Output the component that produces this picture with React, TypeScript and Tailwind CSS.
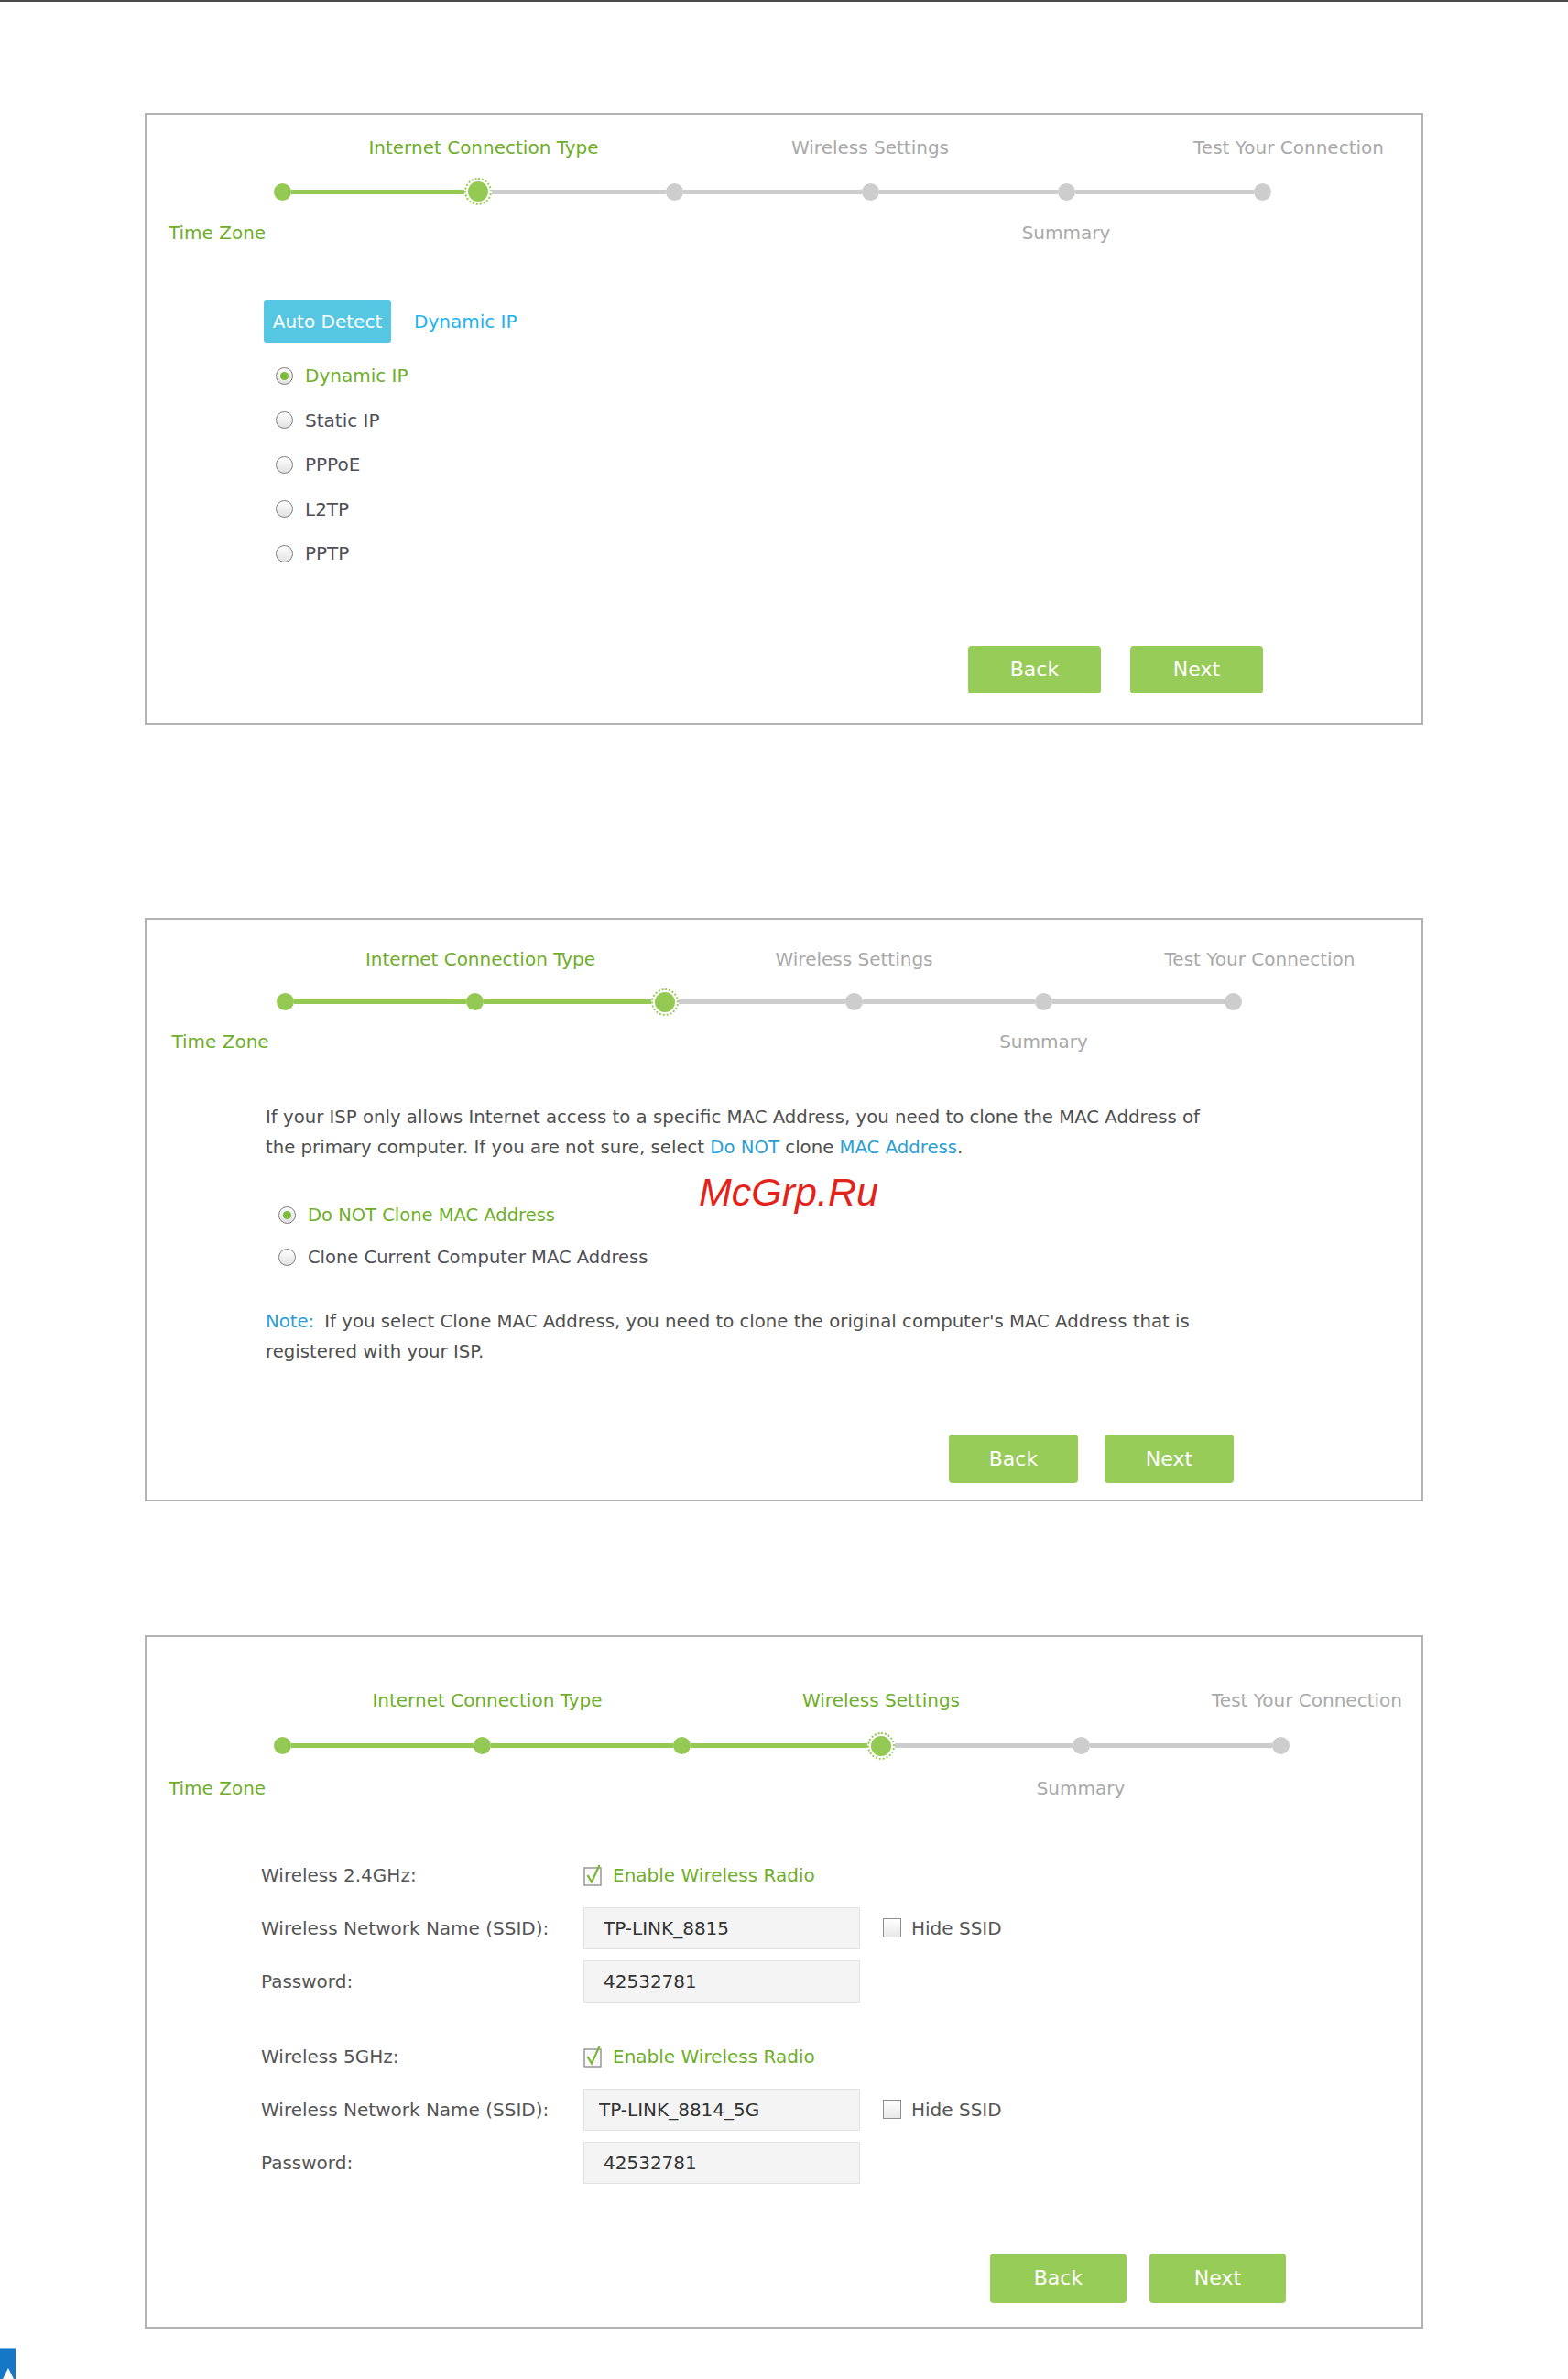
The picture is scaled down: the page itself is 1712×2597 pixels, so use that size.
import React from 'react';

const GREEN = 'bg-[#94c954]';
const GRAY = 'bg-[#cdcdcd]';

type StepperProps = {
  offset: string;
  col: string;
  current: number;
  dotsGap: string;
  bottomGap: string;
};

const TOP_LABELS = ['', 'Internet Connection Type', '', 'Wireless Settings', '', 'Test Your Connection'];
const BOTTOM_LABELS = ['Time Zone', '', '', '', 'Summary', ''];

function Stepper({ offset, col, current, dotsGap, bottomGap }: StepperProps) {
  const labelColor = (i: number) => (i <= current && i !== 4 && i !== 5 ? 'text-[#6fae2a]' : 'text-[#a9a9a9]');
  const topShift = (i: number) => (i === 5 ? 'ml-[58px]' : i === 1 ? 'ml-[12px]' : '');

  return (
    <div className={offset}>
      <div className="flex h-[24px] text-[20px] leading-[24px]">
        {TOP_LABELS.map((label, i) => (
          <div key={i} className={`flex shrink-0 justify-center ${col}`}>
            {label && <span className={`whitespace-nowrap ${labelColor(i)} ${topShift(i)}`}>{label}</span>}
          </div>
        ))}
      </div>

      <div className={`flex h-[30px] ${dotsGap}`}>
        {TOP_LABELS.map((_, i) => {
          const left = i === 0 ? 'bg-transparent' : i <= current ? GREEN : GRAY;
          const right = i === 5 ? 'bg-transparent' : i < current ? GREEN : GRAY;
          return (
            <div key={i} className={`flex shrink-0 items-center ${col}`}>
              <div className={`h-[5px] flex-1 ${left}`} />
              {i === current ? (
                <div className="h-[30px] w-[30px] shrink-0 rounded-full border-2 border-dotted border-[#94c954] p-[2px]">
                  <div className="h-full w-full rounded-full bg-[#94c954]" />
                </div>
              ) : (
                <div className={`h-[19px] w-[19px] shrink-0 rounded-full ${i < current ? GREEN : GRAY}`} />
              )}
              <div className={`h-[5px] flex-1 ${right}`} />
            </div>
          );
        })}
      </div>

      <div className={`flex h-[24px] text-[20px] leading-[24px] ${bottomGap}`}>
        {BOTTOM_LABELS.map((label, i) => (
          <div key={i} className={`flex shrink-0 justify-center ${col}`}>
            {label && (
              <span className={`whitespace-nowrap ${labelColor(i)} ${i === 0 ? 'mr-[142px]' : ''}`}>{label}</span>
            )}
          </div>
        ))}
      </div>
    </div>
  );
}

function Radio({ checked }: { checked?: boolean }) {
  return (
    <span className="flex h-[19px] w-[19px] shrink-0 items-center justify-center rounded-full border-[1.5px] border-[#7d7d7d] bg-linear-to-b from-white to-[#e2e2e2]">
      {checked && <span className="h-[9px] w-[9px] rounded-full bg-[#7cbd3a]" />}
    </span>
  );
}

function CheckedBox() {
  return (
    <svg width="22" height="26" viewBox="0 0 22 26" className="shrink-0">
      <rect x="1" y="5" width="18" height="19" fill="#fafafa" stroke="#999999" strokeWidth="1.5" />
      <path d="M4.5 13 L9 20.5 L17.5 2" fill="none" stroke="#7ab536" strokeWidth="2.2" />
    </svg>
  );
}

function EmptyBox() {
  return (
    <span className="h-[21px] w-[20px] shrink-0 border-[1.5px] border-[#8e8e8e] bg-linear-to-b from-white to-[#e8e8e8]" />
  );
}

function Buttons({ wrap, btn }: { wrap: string; btn: string }) {
  return (
    <div className={`flex justify-end ${wrap}`}>
      <button className={`rounded-[4px] bg-[#98cc59] text-[22px] text-white ${btn}`}>Back</button>
      <button className={`rounded-[4px] bg-[#98cc59] text-[22px] text-white ${btn}`}>Next</button>
    </div>
  );
}

function ConnectionTypePanel() {
  const types = ['Dynamic IP', 'Static IP', 'PPPoE', 'L2TP', 'PPTP'];
  return (
    <section className="ml-[158px] mt-[121px] w-[1396px] border-2 border-[#b3b3b3] pt-[24px] pb-[32px]">
      <Stepper offset="ml-[41px]" col="w-[214px]" current={1} dotsGap="mt-[21px]" bottomGap="mt-[18px]" />

      <div className="ml-[128px] mt-[62px] flex items-center gap-[25px]">
        <span className="flex h-[46px] w-[139px] items-center justify-center rounded-[3px] bg-[#55c7e3] text-[20px] text-white">
          Auto Detect
        </span>
        <span className="text-[20px] text-[#1cb3ee]">Dynamic IP</span>
      </div>

      <div className="ml-[141px] mt-[12px] flex flex-col">
        {types.map((t, i) => (
          <label key={t} className="flex h-[48.5px] items-center gap-[13px] text-[20px]">
            <Radio checked={i === 0} />
            <span className={i === 0 ? 'text-[#6fae2a]' : 'text-[#4f4f57]'}>{t}</span>
          </label>
        ))}
      </div>

      <Buttons wrap="mt-[76px] gap-[32px] pr-[173px]" btn="h-[52px] w-[145px]" />
    </section>
  );
}

function MacClonePanel() {
  return (
    <section className="relative ml-[158px] mt-[211px] w-[1396px] border-2 border-[#b3b3b3] pt-[31px] pb-[18px]">
      <Stepper offset="ml-[48px]" col="w-[207px]" current={2} dotsGap="mt-[20px]" bottomGap="mt-[16px]" />

      <div className="ml-[130px] mt-[54px] text-[19.7px] leading-[33px] text-[#4f4f4f]">
        <p>If your ISP only allows Internet access to a specific MAC Address, you need to clone the MAC Address of</p>
        <p>
          the primary computer. If you are not sure, select <span className="text-[#2a9fd6]">Do NOT</span> clone{' '}
          <span className="text-[#2a9fd6]">MAC Address</span>.
        </p>
      </div>

      <div className="ml-[144px] mt-[35px] flex flex-col text-[19.5px]">
        <label className="flex h-[46px] items-center gap-[13px]">
          <Radio checked />
          <span className="text-[#6fae2a]">Do NOT Clone MAC Address</span>
        </label>
        <label className="flex h-[46px] items-center gap-[13px]">
          <Radio />
          <span className="text-[#4f4f57]">Clone Current Computer MAC Address</span>
        </label>
      </div>

      <div className="ml-[130px] mt-[30px] text-[19.7px] leading-[33px] text-[#4f4f4f]">
        <p>
          <span className="mr-[11px] text-[#2a9fd6]">Note:</span>If you select Clone MAC Address, you need to clone the
          original computer's MAC Address that is
        </p>
        <p>registered with your ISP.</p>
      </div>

      <Buttons wrap="mt-[74px] gap-[29px] pr-[205px]" btn="h-[53px] w-[141px]" />

      <span className="absolute left-[603px] top-[272px] font-['Liberation_Sans',sans-serif] text-[43px] italic leading-[50px] text-[#e2231a]">
        McGrp.Ru
      </span>
    </section>
  );
}

function WirelessGroup({ band, ssid, password, ssidPad }: { band: string; ssid: string; password: string; ssidPad: string }) {
  const input = 'h-[46px] w-[302px] border border-[#e2e2e2] bg-[#f4f4f4] text-[20px] text-[#333] outline-none';
  return (
    <div className="grid grid-cols-[352px_302px_auto] text-[20px] text-[#555]">
      <div className="flex h-[58px] items-center">{band}</div>
      <div className="col-span-2 flex h-[58px] items-center gap-[10px]">
        <CheckedBox />
        <span className="text-[#6fae2a]">Enable Wireless Radio</span>
      </div>

      <div className="flex h-[58px] items-center">Wireless Network Name (SSID):</div>
      <div className="flex h-[58px] items-center">
        <input readOnly defaultValue={ssid} className={`${input} ${ssidPad}`} />
      </div>
      <div className="ml-[25px] flex h-[58px] items-center gap-[11px]">
        <EmptyBox />
        <span>Hide SSID</span>
      </div>

      <div className="flex h-[58px] items-center">Password:</div>
      <div className="flex h-[58px] items-center">
        <input readOnly defaultValue={password} className={`${input} pl-[21px]`} />
      </div>
    </div>
  );
}

function WirelessPanel() {
  return (
    <section className="ml-[158px] mt-[146px] w-[1396px] border-2 border-[#b3b3b3] pt-[57px] pb-[26px]">
      <Stepper offset="ml-[39px]" col="w-[218px]" current={3} dotsGap="mt-[23px]" bottomGap="mt-[19px]" />

      <div className="ml-[125px] mt-[54px] flex flex-col gap-[24px]">
        <WirelessGroup band="Wireless 2.4GHz:" ssid="TP-LINK_8815" password="42532781" ssidPad="pl-[21px]" />
        <WirelessGroup band="Wireless 5GHz:" ssid="TP-LINK_8814_5G" password="42532781" ssidPad="pl-[16px]" />
      </div>

      <Buttons wrap="mt-[70px] gap-[25px] pr-[148px]" btn="h-[54px] w-[149px]" />
    </section>
  );
}

export default function App() {
  return (
    <div className="flex h-[2597px] w-[1712px] flex-col overflow-hidden border-t-2 border-[#4a4a4a] bg-white font-['DejaVu_Sans',sans-serif]">
      <ConnectionTypePanel />
      <MacClonePanel />
      <WirelessPanel />

      <div className="mt-auto h-[34px] w-[17px] shrink-0">
        <svg width="17" height="34" viewBox="0 0 17 34">
          <path d="M0 0H17V34H15L9 22L3 34H0Z" fill="#1677c7" />
          <rect x="0" y="0" width="17" height="1" fill="#7db6e6" />
        </svg>
      </div>
    </div>
  );
}
